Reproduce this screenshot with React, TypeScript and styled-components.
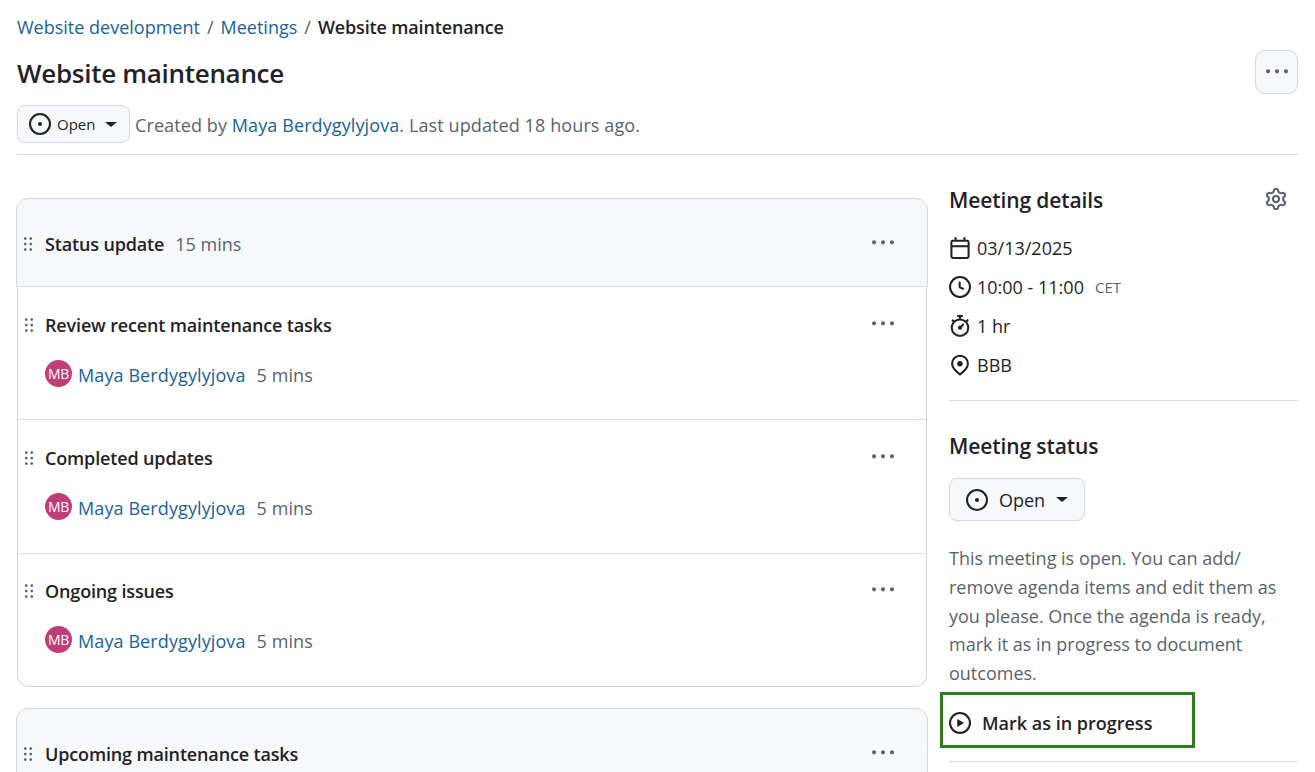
import React from "react";
import styled, { createGlobalStyle } from "styled-components";

const AUTHOR = "Maya Berdygylyjova";

const SECTIONS = [
  {
    title: "Status update",
    duration: "15 mins",
    items: ["Review recent maintenance tasks", "Completed updates", "Ongoing issues"],
  },
  { title: "Upcoming maintenance tasks", duration: "", items: [] as string[] },
];

const ICONS = {
  issue:
    "M8 9.5a1.5 1.5 0 1 0 0-3 1.5 1.5 0 0 0 0 3ZM8 0a8 8 0 1 1 0 16A8 8 0 0 1 8 0ZM1.5 8a6.5 6.5 0 1 0 13 0 6.5 6.5 0 0 0-13 0Z",
  clock:
    "M8 0a8 8 0 1 1 0 16A8 8 0 0 1 8 0ZM1.5 8a6.5 6.5 0 1 0 13 0 6.5 6.5 0 0 0-13 0Zm7-3.25v2.992l2.028.812a.75.75 0 0 1-.557 1.392l-2.5-1A.751.751 0 0 1 7 8.25v-3.5a.75.75 0 0 1 1.5 0Z",
  calendar:
    "M4.75 0a.75.75 0 0 1 .75.75V2h5V.75a.75.75 0 0 1 1.5 0V2h1.25c.966 0 1.75.784 1.75 1.75v10.5A1.75 1.75 0 0 1 13.25 16H2.75A1.75 1.75 0 0 1 1 14.25V3.75C1 2.784 1.784 2 2.75 2H4V.75A.75.75 0 0 1 4.75 0ZM2.5 7.5v6.75c0 .138.112.25.25.25h10.5a.25.25 0 0 0 .25-.25V7.5Zm10.75-4H2.75a.25.25 0 0 0-.25.25V6h11V3.75a.25.25 0 0 0-.25-.25Z",
  stopwatch:
    "M5.75.75A.75.75 0 0 1 6.5 0h3a.75.75 0 0 1 0 1.5h-.75v1l-.001.041a6.724 6.724 0 0 1 3.464 1.435l.007-.006.75-.75a.747.747 0 0 1 1.06 1.06l-.75.75-.006.007a6.75 6.75 0 1 1-10.548 0L2.72 5.03l-.75-.75a.751.751 0 0 1 1.042-1.018.751.751 0 0 1 .018.018l.75.75.007.006A6.72 6.72 0 0 1 7.25 2.541V1.5H6.5a.75.75 0 0 1-.75-.75ZM8 14.5A5.25 5.25 0 1 0 8 4a5.25 5.25 0 0 0 0 10.5Zm.389-6.7 1.33-1.33a.75.75 0 1 1 1.061 1.06L9.45 8.861A1.503 1.503 0 0 1 8 10.75a1.499 1.499 0 1 1 .389-2.95Z",
  location:
    "m12.596 11.596-3.535 3.536a1.5 1.5 0 0 1-2.122 0l-3.535-3.536a6.5 6.5 0 1 1 9.192-9.193 6.5 6.5 0 0 1 0 9.193Zm-1.06-8.132v-.001a5 5 0 1 0-7.072 7.072L8 14.07l3.536-3.534a5 5 0 0 0 0-7.072ZM8 9a2 2 0 1 1-.001-3.999A2 2 0 0 1 8 9Z",
  play:
    "M8 0a8 8 0 1 1 0 16A8 8 0 0 1 8 0ZM1.5 8a6.5 6.5 0 1 0 13 0 6.5 6.5 0 0 0-13 0Zm4.879-2.773 4.264 2.559a.25.25 0 0 1 0 .428l-4.264 2.559A.25.25 0 0 1 6 10.559V5.442a.25.25 0 0 1 .379-.215Z",
  gear:
    "M8 0a8.2 8.2 0 0 1 .701.031C9.444.095 9.99.645 10.16 1.29l.288 1.107c.018.066.079.158.212.224.231.114.454.243.668.386.123.082.233.09.299.071l1.103-.303c.644-.176 1.392.021 1.82.63.27.385.506.792.704 1.218.315.675.111 1.422-.364 1.891l-.814.806c-.049.048-.098.147-.088.294.016.257.016.515 0 .772-.01.147.038.246.088.294l.814.806c.475.469.679 1.216.364 1.891a7.977 7.977 0 0 1-.704 1.217c-.428.61-1.176.807-1.82.63l-1.102-.302c-.067-.019-.177-.011-.3.071a5.909 5.909 0 0 1-.668.386c-.133.066-.194.158-.211.224l-.29 1.106c-.168.646-.715 1.196-1.458 1.26a8.006 8.006 0 0 1-1.402 0c-.743-.064-1.289-.614-1.458-1.26l-.289-1.106c-.018-.066-.079-.158-.212-.224a5.738 5.738 0 0 1-.668-.386c-.123-.082-.233-.09-.299-.071l-1.103.303c-.644.176-1.392-.021-1.82-.63a8.12 8.12 0 0 1-.704-1.218c-.315-.675-.111-1.422.363-1.891l.815-.806c.05-.048.098-.147.088-.294a6.214 6.214 0 0 1 0-.772c.01-.147-.038-.246-.088-.294l-.815-.806C.635 6.045.431 5.298.746 4.623a7.92 7.92 0 0 1 .704-1.217c.428-.61 1.176-.807 1.82-.63l1.102.302c.067.019.177.011.3-.071.214-.143.437-.272.668-.386.133-.066.194-.158.211-.224l.29-1.106C6.009.645 6.556.095 7.299.03 7.53.01 7.764 0 8 0Zm-.571 1.525c-.036.003-.108.036-.137.146l-.289 1.105c-.147.561-.549.967-.998 1.189-.173.086-.34.183-.5.29-.417.278-.97.423-1.529.27l-1.103-.303c-.109-.03-.175.016-.195.045-.22.312-.412.644-.573.99-.014.031-.021.11.059.19l.815.806c.411.406.562.957.53 1.456a4.709 4.709 0 0 0 0 .582c.032.499-.119 1.05-.53 1.456l-.815.806c-.081.08-.073.159-.059.19.162.346.353.677.573.989.02.03.085.076.195.046l1.102-.303c.56-.153 1.113-.008 1.53.27.161.107.328.204.501.29.447.222.85.629.997 1.189l.289 1.105c.029.109.101.143.137.146a6.6 6.6 0 0 0 1.142 0c.036-.003.108-.036.137-.146l.289-1.105c.147-.561.549-.967.998-1.189.173-.086.34-.183.5-.29.417-.278.97-.423 1.529-.27l1.103.303c.109.029.175-.016.195-.045.22-.313.411-.644.573-.99.014-.031.021-.11-.059-.19l-.815-.806c-.411-.406-.562-.957-.53-1.456a4.709 4.709 0 0 0 0-.582c-.032-.499.119-1.05.53-1.456l.815-.806c.081-.08.073-.159.059-.19a6.464 6.464 0 0 0-.573-.989c-.02-.03-.085-.076-.195-.046l-1.102.303c-.56.153-1.113.008-1.53-.27a4.44 4.44 0 0 0-.501-.29c-.447-.222-.85-.629-.997-1.189l-.289-1.105c-.029-.11-.101-.143-.137-.146a6.6 6.6 0 0 0-1.142 0ZM11 8a3 3 0 1 1-6 0 3 3 0 0 1 6 0ZM9.5 8a1.5 1.5 0 1 0-3.001.001A1.5 1.5 0 0 0 9.5 8Z",
  grabber:
    "M10 13a1 1 0 1 1 0-2 1 1 0 0 1 0 2Zm0-4a1 1 0 1 1 0-2 1 1 0 0 1 0 2Zm-4 4a1 1 0 1 1 0-2 1 1 0 0 1 0 2Zm5-9a1 1 0 1 1-2 0 1 1 0 0 1 2 0ZM7 8a1 1 0 1 1-2 0 1 1 0 0 1 2 0ZM6 5a1 1 0 1 1 0-2 1 1 0 0 1 0 2Z",
  kebab:
    "M8 9a1.5 1.5 0 1 0 0-3 1.5 1.5 0 0 0 0 3ZM1.5 9a1.5 1.5 0 1 0 0-3 1.5 1.5 0 0 0 0 3Zm13 0a1.5 1.5 0 1 0 0-3 1.5 1.5 0 0 0 0 3Z",
};

function Icon({ name }: { name: keyof typeof ICONS }) {
  return (
    <Glyph viewBox="0 0 16 16" fill="currentColor" aria-hidden="true">
      <path fillRule="evenodd" d={ICONS[name]} />
    </Glyph>
  );
}

function App() {
  return (
    <Page>
      <GlobalStyle />
      <Breadcrumb>
        <Link>Website development</Link>
        <Slash>/</Slash>
        <Link>Meetings</Link>
        <Slash>/</Slash>
        <Current>Website maintenance</Current>
      </Breadcrumb>

      <TitleRow>
        <Title>Website maintenance</Title>
        <MoreButton>
          <Icon name="kebab" />
        </MoreButton>
      </TitleRow>

      <MetaRow>
        <StateButton>
          <Icon name="issue" />
          <StateLabel>Open</StateLabel>
          <Caret />
        </StateButton>
        <MetaText>
          Created by <Link>{AUTHOR}</Link>. Last updated 18 hours ago.
        </MetaText>
      </MetaRow>

      <Columns>
        <Agenda>
          {SECTIONS.map((section) => (
            <Section key={section.title}>
              <SectionHeader $hasItems={section.items.length > 0}>
                <Grabber>
                  <Icon name="grabber" />
                </Grabber>
                <SectionTitle>{section.title}</SectionTitle>
                <Muted>{section.duration}</Muted>
                <RowMenu>
                  <Icon name="kebab" />
                </RowMenu>
              </SectionHeader>
              {section.items.length > 0 && (
                <ItemList>
                  {section.items.map((item) => (
                    <Item key={item}>
                      <ItemHead>
                        <Grabber>
                          <Icon name="grabber" />
                        </Grabber>
                        <SectionTitle>{item}</SectionTitle>
                        <RowMenu>
                          <Icon name="kebab" />
                        </RowMenu>
                      </ItemHead>
                      <ItemMeta>
                        <Avatar>MB</Avatar>
                        <Link>{AUTHOR}</Link>
                        <Muted>5 mins</Muted>
                      </ItemMeta>
                    </Item>
                  ))}
                </ItemList>
              )}
            </Section>
          ))}
        </Agenda>

        <Sidebar>
          <DetailsHead>
            <SideTitle>Meeting details</SideTitle>
            <GearIcon>
              <Icon name="gear" />
            </GearIcon>
          </DetailsHead>
          <DetailRow>
            <Icon name="calendar" />
            <span>03/13/2025</span>
          </DetailRow>
          <DetailRow>
            <Icon name="clock" />
            <span>10:00 - 11:00</span>
            <Zone>CET</Zone>
          </DetailRow>
          <DetailRow>
            <Icon name="stopwatch" />
            <span>1 hr</span>
          </DetailRow>
          <DetailRow>
            <Icon name="location" />
            <span>BBB</span>
          </DetailRow>
          <SideDivider />

          <SideTitle>Meeting status</SideTitle>
          <StatusButton>
            <Icon name="issue" />
            <span>Open</span>
            <Caret />
          </StatusButton>
          <StatusText>
            This meeting is open. You can add/ remove agenda items and edit them as you please.
            Once the agenda is ready, mark it as in progress to document outcomes.
          </StatusText>
          <ProgressAction>
            <Icon name="play" />
            <span>Mark as in progress</span>
          </ProgressAction>
          <SideDivider />
        </Sidebar>
      </Columns>
    </Page>
  );
}

export default App;

const GlobalStyle = createGlobalStyle`
  html, body {
    margin: 0;
    height: 772px;
    overflow: hidden;
    background: #fff;
  }
  * {
    box-sizing: border-box;
  }
`;

const Page = styled.div`
  padding: 0 17px;
  font-family: "Open Sans", "Liberation Sans", sans-serif;
  font-size: 18px;
  color: #1f2328;
`;

const Glyph = styled.svg`
  display: block;
  flex: none;
  width: 22px;
  height: 22px;
`;

const Breadcrumb = styled.nav`
  display: flex;
  align-items: center;
  gap: 7px;
  height: 53px;
`;

const Link = styled.a`
  color: #1a6299;
`;

const Slash = styled.span`
  color: #59636e;
`;

const Current = styled.span`
  font-weight: 600;
  letter-spacing: -0.15px;
`;

const TitleRow = styled.div`
  display: flex;
  align-items: center;
  justify-content: space-between;
  height: 40px;
`;

const Title = styled.h1`
  margin: 0;
  font-size: 26px;
  font-weight: 600;
  letter-spacing: -0.3px;
`;

const MoreButton = styled.button`
  display: flex;
  align-items: center;
  justify-content: center;
  width: 43px;
  height: 44px;
  margin-top: -2px;
  padding: 0;
  background: #f6f8fa;
  border: 1px solid #d1d9e0;
  border-radius: 10px;
  color: #59636e;
`;

const MetaRow = styled.div`
  display: flex;
  align-items: center;
  gap: 5px;
  margin-top: 12px;
  padding-bottom: 11px;
  border-bottom: 1px solid #d8dee4;
`;

const StateButton = styled.button`
  display: flex;
  align-items: center;
  width: 113px;
  height: 38px;
  padding: 0 0 0 11px;
  background: #f6f8fa;
  border: 1px solid #d1d9e0;
  border-radius: 8px;
  color: #1f2328;
  font: inherit;
  font-size: 15px;
`;

const StateLabel = styled.span`
  margin-left: 6px;
`;

const Caret = styled.span`
  width: 0;
  height: 0;
  margin-left: 10px;
  border-left: 6px solid transparent;
  border-right: 6px solid transparent;
  border-top: 5px solid #1f2328;
`;

const MetaText = styled.span`
  margin-top: 2px;
  letter-spacing: 0.1px;
  color: #59636e;
`;

const Columns = styled.div`
  display: grid;
  grid-template-columns: 911px 349px;
  gap: 21px;
  margin-top: 43px;
`;

const Agenda = styled.div`
  display: flex;
  flex-direction: column;
  gap: 21px;
  margin-left: -1px;
`;

const Section = styled.section`
  display: flex;
  flex-direction: column;
`;

const SectionHeader = styled.div<{ $hasItems: boolean }>`
  display: flex;
  align-items: center;
  height: 89px;
  padding-top: 2px;
  background: #f6f8fa;
  border: 1px solid #d1d9e0;
  border-radius: ${(p) => (p.$hasItems ? "12px 12px 0 0" : "12px")};
`;

const Grabber = styled.span`
  display: flex;
  margin-right: 6px;
  color: #59636e;
`;

const SectionTitle = styled.span`
  font-weight: 600;
  letter-spacing: -0.15px;
  margin-right: 11px;
`;

const Muted = styled.span`
  color: #59636e;
`;

const RowMenu = styled.span`
  display: flex;
  margin: -2px 33px 0 auto;
  color: #59636e;
`;

const ItemList = styled.div`
  margin: 0 1px;
  border: 1px solid #d1d9e0;
  border-top: 0;
  border-radius: 0 0 12px 12px;
`;

const Item = styled.div`
  height: 133px;
  padding-top: 22px;
  border-bottom: 1px solid #d8dee4;

  &:nth-child(2) {
    height: 134px;
  }

  &:last-child {
    height: 132px;
    padding-top: 21px;
    border-bottom: 0;
  }
`;

const ItemHead = styled.div`
  display: flex;
  align-items: center;
  height: 32px;

  ${Grabber} {
    margin-right: 5px;
  }

  ${RowMenu} {
    margin-right: 32px;
  }
`;

const ItemMeta = styled.div`
  display: flex;
  align-items: center;
  gap: 11px;
  margin: 20px 0 0 27px;
  height: 28px;
  letter-spacing: 0.1px;
`;

const Avatar = styled.span`
  display: flex;
  align-items: center;
  justify-content: center;
  width: 27px;
  height: 27px;
  margin: -3px -5px 0 0;
  border-radius: 50%;
  background: #bf3d78;
  color: #fff;
  font-size: 14px;
  letter-spacing: -0.4px;
`;

const Sidebar = styled.aside`
  display: flex;
  flex-direction: column;
  margin-top: -12px;
`;

const DetailsHead = styled.div`
  display: flex;
  align-items: center;
  justify-content: space-between;
  margin-bottom: 14px;
  padding-right: 11px;
`;

const SideTitle = styled.h2`
  margin: 0;
  font-size: 21px;
  font-weight: 600;
  line-height: 28px;
  letter-spacing: -0.1px;
`;

const GearIcon = styled.span`
  display: flex;
  margin-top: -3px;
  color: #59636e;
`;

const DetailRow = styled.div`
  display: flex;
  align-items: center;
  gap: 6px;
  height: 39px;
  color: #1f2328;
`;

const Zone = styled.span`
  margin-left: 5px;
  font-size: 15px;
  color: #59636e;
`;

const SideDivider = styled.div`
  height: 1px;
  margin: 16px 0 31px;
  background: #d8dee4;
`;

const StatusButton = styled.button`
  display: flex;
  align-items: center;
  gap: 11px;
  width: 136px;
  height: 43px;
  margin-top: 18px;
  padding: 0 0 0 16px;
  background: #f6f8fa;
  border: 1px solid #d1d9e0;
  border-radius: 8px;
  color: #1f2328;
  font: inherit;

  ${Caret} {
    margin-left: 0;
  }
`;

const StatusText = styled.p`
  margin: 23px 0 0;
  line-height: 28.8px;
  color: #59636e;
`;

const ProgressAction = styled.div`
  display: flex;
  align-items: center;
  gap: 11px;
  width: 255px;
  height: 56px;
  margin: 4px 0 -3px -9px;
  padding: 6px 0 0 6px;
  border: 3px solid #2f7d1f;
  font-weight: 600;
`;
